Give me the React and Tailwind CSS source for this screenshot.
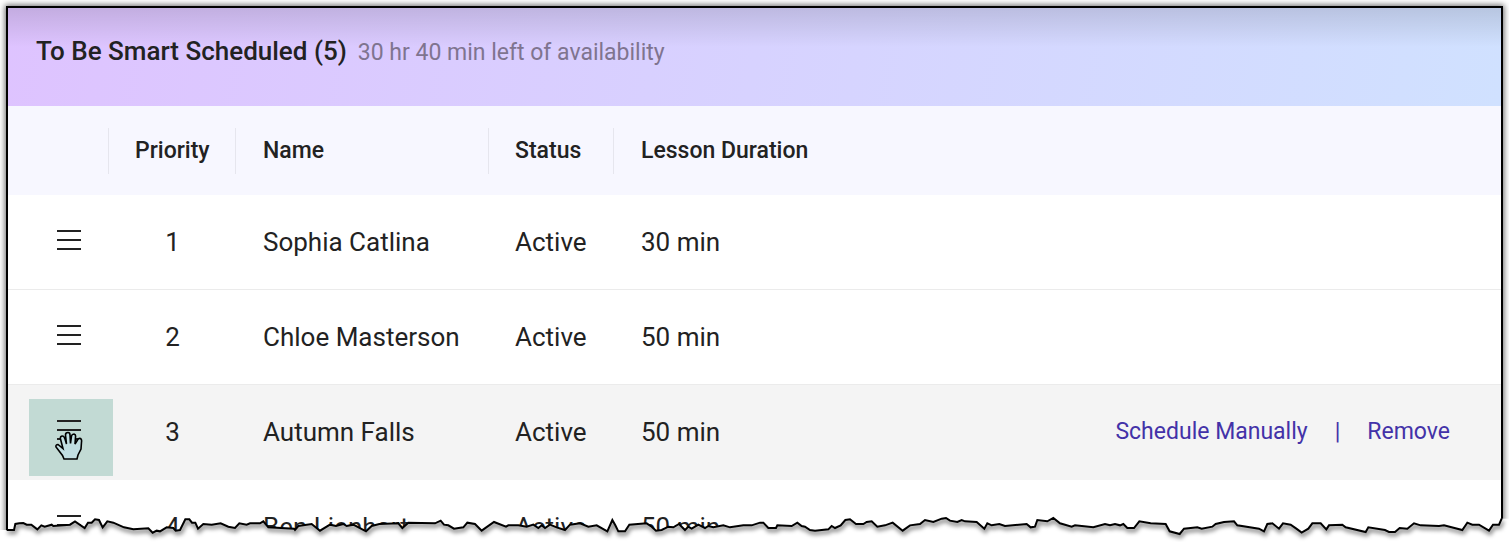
const students = [
  { priority: 1, name: 'Sophia Catlina', status: 'Active', duration: '30 min' },
  { priority: 2, name: 'Chloe Masterson', status: 'Active', duration: '50 min' },
  { priority: 3, name: 'Autumn Falls', status: 'Active', duration: '50 min', hovered: true },
  { priority: 4, name: 'Ben Lienhart', status: 'Active', duration: '50 min' },
];

const columns = [
  { label: 'Priority', width: 'w-[127px]', padding: 'pl-[26px]' },
  { label: 'Name', width: 'w-[253px]', padding: 'pl-[27px]' },
  { label: 'Status', width: 'w-[125px]', padding: 'pl-[26px]' },
  { label: 'Lesson Duration', width: 'w-[240px]', padding: 'pl-[27px]', last: true },
];

// Ragged line along the bottom of the panel
const TEAR =
  '20,84 42,84 46,66 58,64 70,63 80,68 94,68 112,82 124,70 134,74 155,68 160,72 210,68 225,58 254,78 264,62 275,62 285,52 297,54 308,76 322,58 340,62 372,76 400,82 445,79 458,92 470,86 480,88 500,76 520,78 527,86 540,84 556,52 568,52 576,62 586,62 594,80 610,66 635,68 662,64 685,74 705,78 718,64 740,68 750,64 780,64 790,58 805,76 882,80 885,84 895,72 935,66 960,86 990,68 1008,72 1030,66 1040,72 1060,68 1098,88 1115,72 1138,66 ' +
  '1195,64 1207,78 1225,62 1305,64 1322,56 1332,68 1345,70 1362,80 1390,76 1402,62 1425,66 1445,86 1482,60 1518,74 1525,70 1555,70 1580,74 1600,68 1615,78 1625,70 1635,78 1650,68 1670,76 1695,84 1710,68 1740,64 1765,74 1790,70 1822,88 1837,54 1846,70 1855,88 1875,88 1888,68 1940,64 1955,74 1968,86 1985,84 2005,74 2020,76 2037,66 2055,84 2065,74 2075,80 2095,68 2115,78 2125,72 2140,76 2170,70 2190,76 2230,70 2255,70 2280,62 ' +
  '2290,62 2305,78 2328,78 2332,70 2375,72 2392,62 2405,72 2415,74 2430,84 2445,86 2485,82 2495,72 2505,78 2522,70 2536,54 2550,52 2568,66 2590,66 2600,60 2615,58 2632,74 2655,70 2678,62 2708,86 2730,70 2760,66 2775,54 2800,60 2825,50 2838,48 2850,56 2872,60 2885,54 2895,58 2930,60 2953,80 2962,64 2975,70 2998,66 3015,72 3080,66 3092,76 3105,74 3112,54 3142,58 3160,48 3180,64 3215,74 3225,70 3280,76 3315,66 3330,70 3345,66 3360,70 3370,66 3382,78 3402,78 3418,58 ' +
  '3452,64 3497,66 3509,88 3539,96 3552,80 3592,76 3605,80 3637,74 3647,66 3672,60 3702,58 3712,70 3777,80 3792,88 3802,66 3817,64 3837,80 3849,64 3872,68 3889,80 3905,92 3925,80 3937,64 3962,64 3979,82 3987,70 4027,68 4037,76 4097,90 4105,76 4155,84 4167,90 4185,90 4199,78 4222,80 4242,64 4262,70 4317,72 4332,70 4387,84 4402,62 4417,68 4437,68 4467,86 4479,68 4497,68 4505,50';

function DragIcon() {
  return (
    <svg width="24" height="22" viewBox="0 0 24 22" aria-hidden="true">
      <path d="M0 2h24M0 11h24M0 20h24" stroke="#222" strokeWidth="2" />
    </svg>
  );
}

function HandCursor() {
  return (
    <svg
      className="absolute left-[26px] top-[32px]"
      width="28"
      height="29"
      viewBox="0 0 28 29"
      aria-hidden="true"
    >
      <path
        d="M9 28 L7.500 24.500 L1 16 Q0.500 13.500 3 13.500 L8 17.500 L5.500 8 Q5 5 7.500 5 Q9 5 10 8 L11.500 13 L10.500 4 Q10.500 1.500 13 1.500 Q15 1.500 15 4 L15.500 12.500 L16.500 5 Q17 3 19 3 Q21 3.500 20.500 6 L20 13 L22.500 9 Q23.500 7 25.500 7.500 Q27 8.500 26.500 11 L26 18 L23 24 L22 28 Z"
        fill="#c2dfe2"
        stroke="#000"
        strokeWidth="1.600"
      />
    </svg>
  );
}

function StudentRow({ student }) {
  const { priority, name, status, duration, hovered } = student;

  return (
    <tr className={hovered ? 'h-[95px] bg-[#f4f4f4]' : 'h-[95px] shadow-[inset_0_-1px_#ebebeb]'}>
      <td className="p-0 pb-1 align-bottom">
        <button
          type="button"
          aria-label={`Reorder ${name}`}
          className={`relative ml-[21px] flex h-[77px] w-[84px] items-start pt-5 pl-7 ${
            hovered ? 'bg-[#c2dad4]' : ''
          }`}
        >
          <DragIcon />
          {hovered && <HandCursor />}
        </button>
      </td>
      <td className="p-0 text-center">{priority}</td>
      <td className="p-0 pl-[27px]">{name}</td>
      <td className="p-0 pl-[26px]">{status}</td>
      <td className="p-0 pl-[27px]">{duration}</td>
      <td className="p-0 pr-[51px]">
        {hovered && (
          <div className="flex items-center justify-end gap-[27px] text-[23px] text-[#4332a8]">
            <a href="#schedule">Schedule Manually</a>
            <span>|</span>
            <a href="#remove">Remove</a>
          </div>
        )}
      </td>
    </tr>
  );
}

function TornEdge() {
  return (
    <svg
      className="absolute inset-x-0 bottom-0 h-10 w-full"
      viewBox="0 0 4527 120"
      preserveAspectRatio="none"
      aria-hidden="true"
    >
      <defs>
        <filter id="tear-shadow" x="-1%" y="-50%" width="102%" height="200%">
          <feGaussianBlur stdDeviation="7" />
        </filter>
        <clipPath id="below-tear">
          <polygon points={`0,84 ${TEAR} 4527,50 4527,120 0,120`} />
        </clipPath>
      </defs>
      <polygon points={`0,84 ${TEAR} 4527,50 4527,120 0,120`} fill="#fff" />
      <g clipPath="url(#below-tear)">
        <polyline
          points={TEAR}
          transform="translate(3 7)"
          fill="none"
          stroke="#000"
          strokeOpacity="0.45"
          strokeWidth="12"
          filter="url(#tear-shadow)"
        />
      </g>
      <polyline points={TEAR} fill="none" stroke="#000" strokeWidth="6" />
    </svg>
  );
}

export default function App() {
  return (
    <div className="relative flex h-screen flex-col overflow-hidden bg-white px-1.5 pt-1.5 font-['Roboto',sans-serif] text-[#222]">
      <main className="flex-1 overflow-hidden border-2 border-b-0 border-black shadow-[0_0_6px_1px_rgba(0,0,0,0.6)]">
        <header className="bg-linear-[100deg,#dec3ff,#d0e1ff]">
          <div className="flex h-[98px] items-baseline gap-[11px] bg-linear-to-b from-black/12 to-transparent to-40% px-7 pt-6">
            <h1 className="text-[26px] font-medium">To Be Smart Scheduled (5)</h1>
            <p className="text-[23px] text-[#7f748f]">30 hr 40 min left of availability</p>
          </div>
        </header>
        <table className="w-full table-fixed border-collapse text-left text-[26px]">
          <thead className="bg-[#f7f7ff] text-[23px]">
            <tr className="h-[89px]">
              <th className="w-[101px] p-0">
                <div className="h-[46px] border-r border-[#e6e6ee]" />
              </th>
              {columns.map((column) => (
                <th key={column.label} className={`p-0 font-medium ${column.width}`}>
                  <div
                    className={`flex h-[46px] items-center pt-0.5 ${column.padding} ${
                      column.last ? '' : 'border-r border-[#e6e6ee]'
                    }`}
                  >
                    {column.label}
                  </div>
                </th>
              ))}
              <th className="p-0" />
            </tr>
          </thead>
          <tbody>
            {students.map((student) => (
              <StudentRow key={student.priority} student={student} />
            ))}
          </tbody>
        </table>
      </main>
      <TornEdge />
    </div>
  );
}
